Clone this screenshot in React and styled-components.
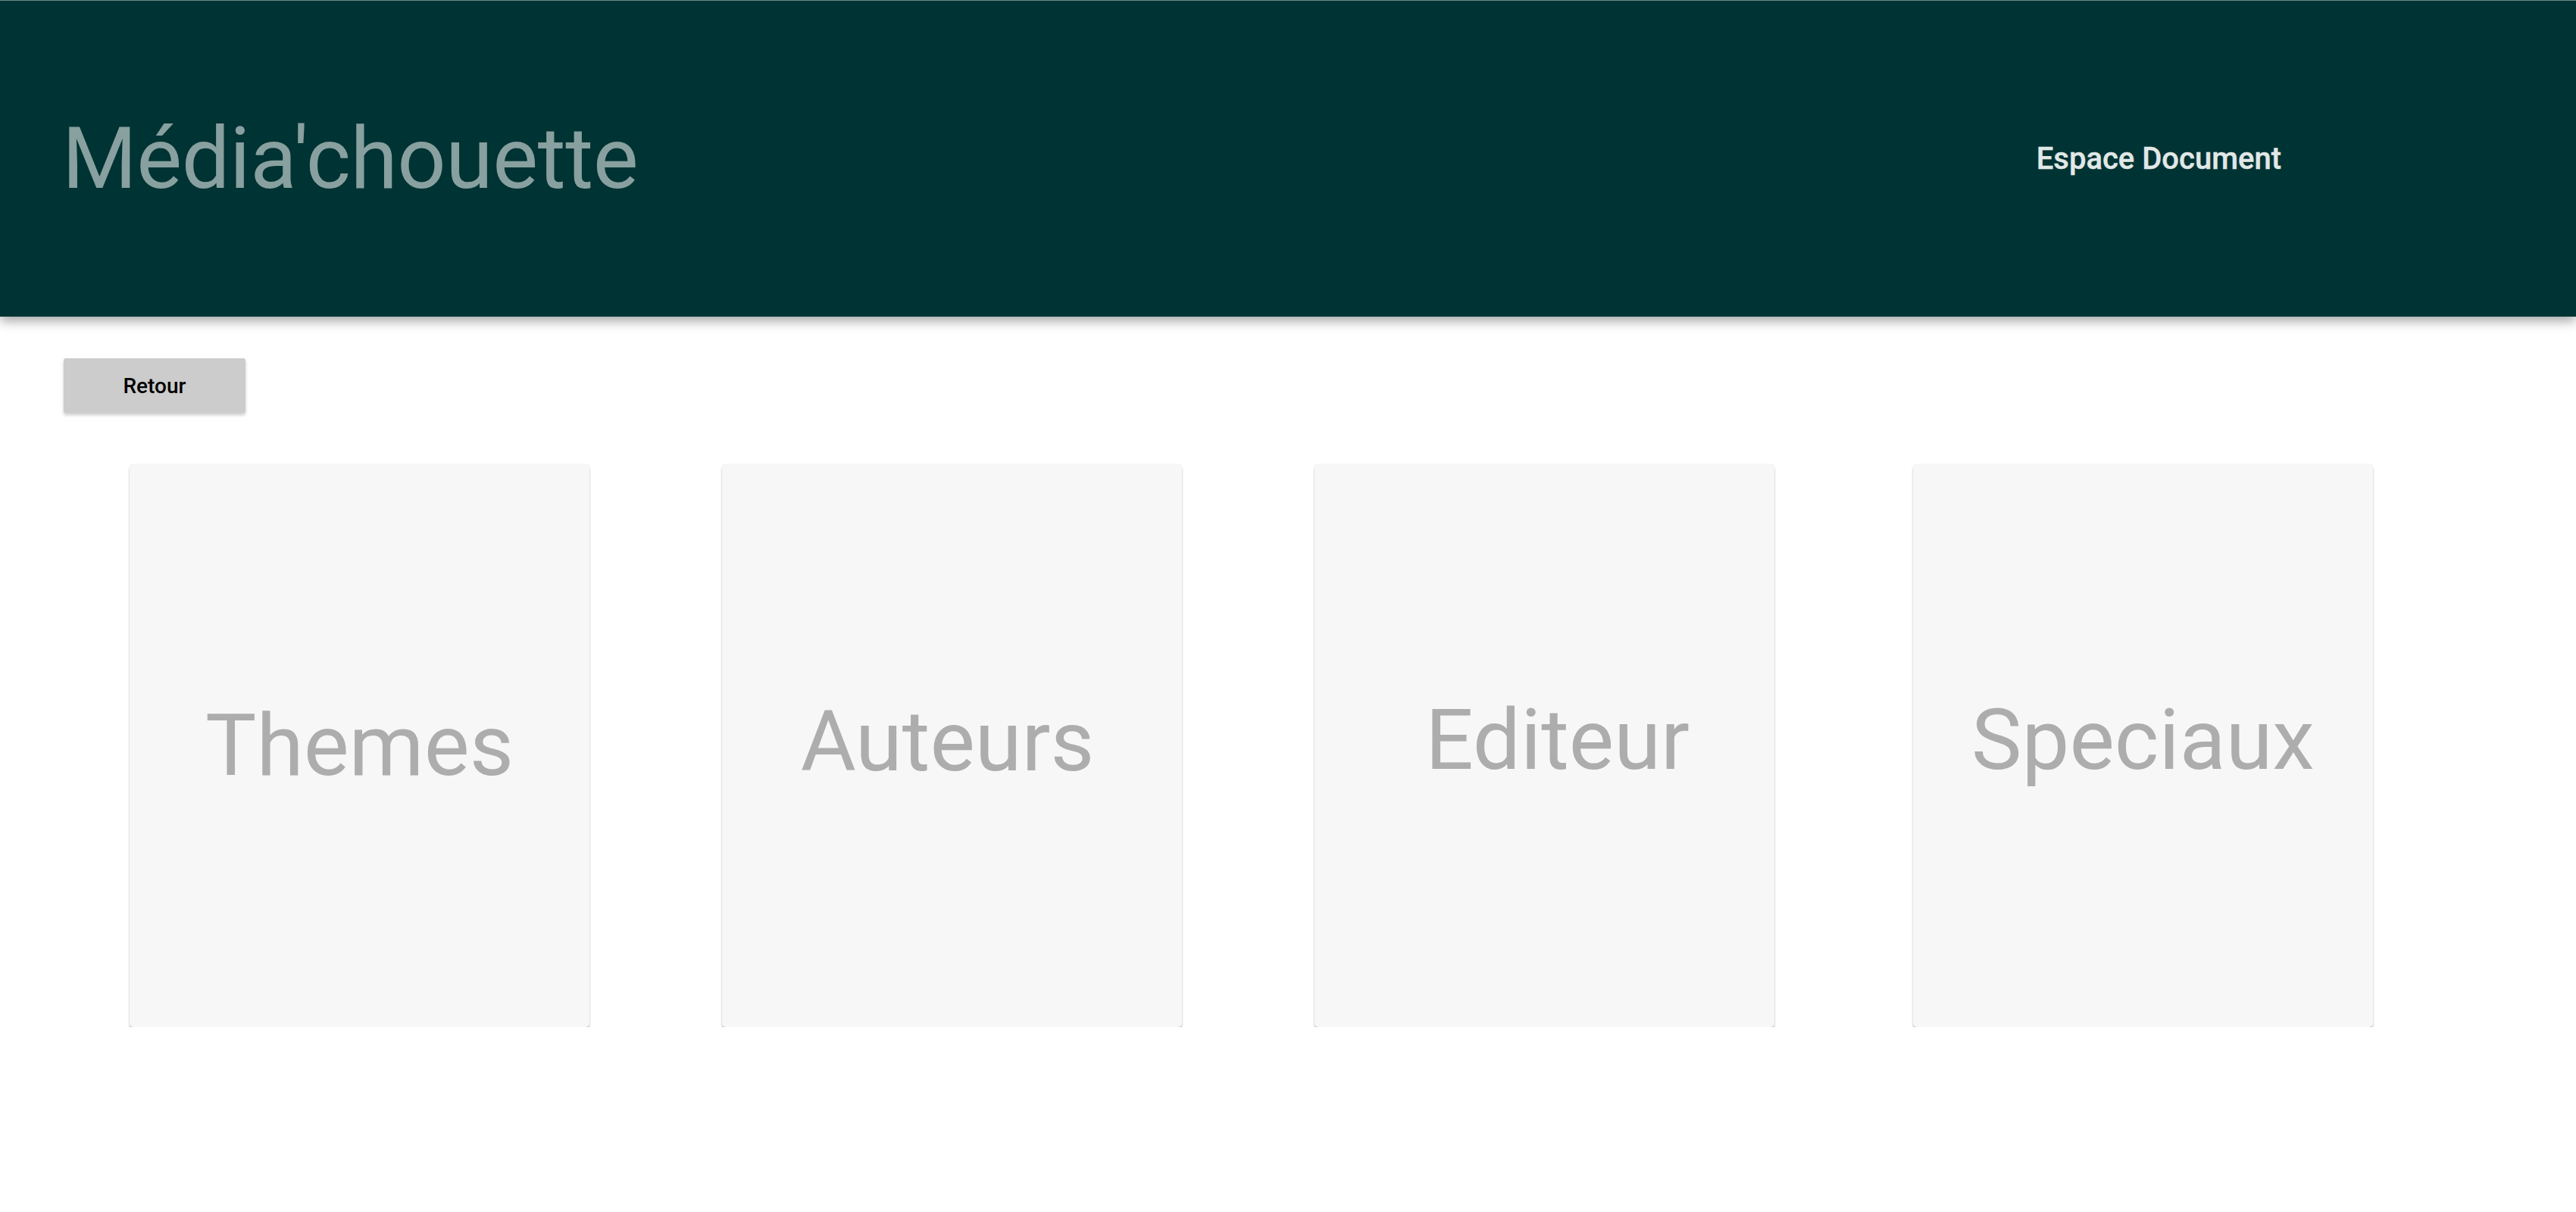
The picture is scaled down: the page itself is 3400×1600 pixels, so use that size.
import styled, { createGlobalStyle } from "styled-components";

const GlobalStyle = createGlobalStyle`
  html, body {
    margin: 0;
    padding: 0;
    background: #ffffff;
    font-family: Roboto, "Liberation Sans", sans-serif;
  }
`;

const Header = styled.header`
  box-sizing: border-box;
  height: 418px;
  background-color: #003333;
  border-top: 1px solid #6d8b89;
  box-shadow: 0 6px 14px rgba(0, 0, 0, 0.35);
  display: flex;
  align-items: center;
  justify-content: space-between;
  padding: 0 389px 0 82px;
  position: relative;
  z-index: 1;
`;

const Brand = styled.h1`
  margin: 0;
  font-size: 113px;
  font-weight: 400;
  color: #88a09f;
  letter-spacing: -0.4px;
`;

const NavLink = styled.a`
  font-size: 40px;
  font-weight: 500;
  color: #e1e8e7;
  text-decoration: none;
  cursor: pointer;
  -webkit-text-stroke: 0.4px #e1e8e7;
`;

const Main = styled.main`
  padding: 55px 0 0 84px;
`;

const BackButton = styled.button`
  width: 240px;
  height: 72px;
  border: none;
  border-radius: 3px;
  background-color: #cccccc;
  box-shadow: 0 3px 4px rgba(0, 0, 0, 0.2);
  font-family: Roboto, "Liberation Sans", sans-serif;
  font-size: 28px;
  font-weight: 500;
  color: #000000;
  cursor: pointer;
`;

const CardRow = styled.div`
  display: flex;
  gap: 175px;
  margin-top: 68px;
  padding-left: 87px;
`;

const Card = styled.div`
  box-sizing: border-box;
  width: 607px;
  height: 743px;
  margin-left: ${(p) => p.$nudge || 0}px;
  background-color: #f7f7f7;
  border-radius: 5px;
  box-shadow: 0 0 2px rgba(0, 0, 0, 0.1), 0 3px 3px rgba(0, 0, 0, 0.22);
  display: flex;
  align-items: center;
  justify-content: center;
  cursor: pointer;
`;

const CardLabel = styled.span`
  font-size: ${(p) => p.$size || 112}px;
  font-weight: 400;
  color: #adadad;
  padding-bottom: ${(p) => p.$lift || 0}px;
  padding-left: ${(p) => p.$right || 0}px;
  padding-right: ${(p) => p.$left || 0}px;
`;

const categories = [
  { label: "Themes", size: 113, lift: 0 },
  { label: "Auteurs", lift: 12, left: 12 },
  { label: "Editeur", lift: 16, right: 34 },
  { label: "Speciaux", lift: 16, nudge: 8 },
];

export default function App() {
  return (
    <>
      <GlobalStyle />
      <Header>
        <Brand>Média'chouette</Brand>
        <NavLink>Espace Document</NavLink>
      </Header>
      <Main>
        <BackButton>Retour</BackButton>
        <CardRow>
          {categories.map((c) => (
            <Card key={c.label} $nudge={c.nudge}>
              <CardLabel
                $size={c.size}
                $lift={c.lift}
                $right={c.right}
                $left={c.left}
              >
                {c.label}
              </CardLabel>
            </Card>
          ))}
        </CardRow>
      </Main>
    </>
  );
}
